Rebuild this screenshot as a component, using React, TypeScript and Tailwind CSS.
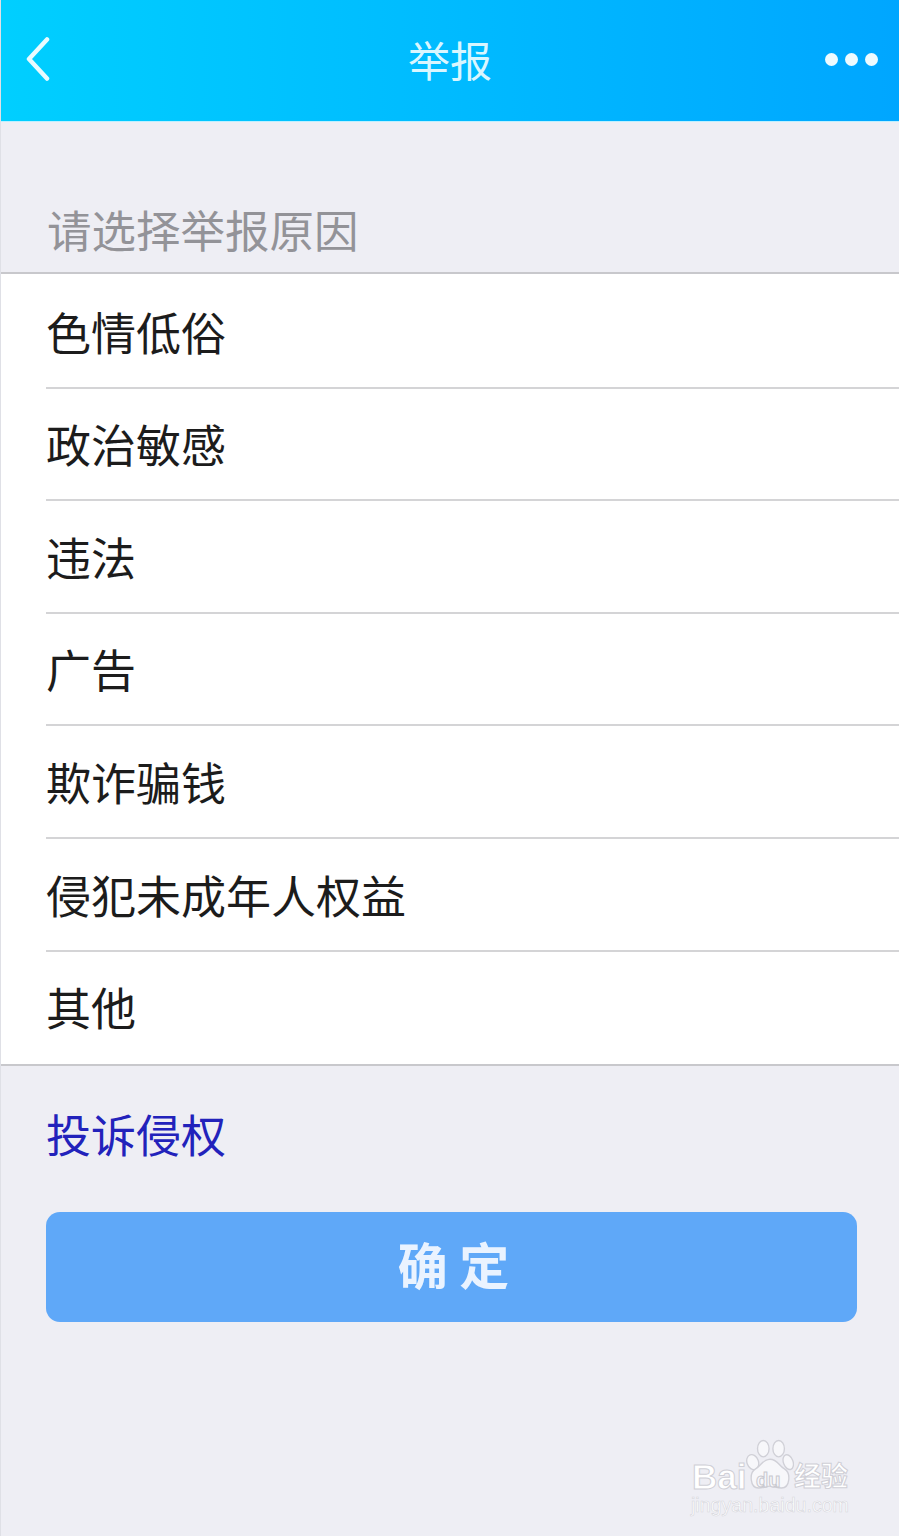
const reasons = ["色情低俗", "政治敏感", "违法", "广告", "欺诈骗钱", "侵犯未成年人权益", "其他"];

const cjk = "font-['Noto_Sans_CJK_SC',sans-serif]";

function Watermark() {
  return (
    <div className="absolute left-[690px] top-[1438px] w-[165px] text-white">
      <div className="relative h-[56px]">
        <span className="absolute left-[1px] top-[18px] font-['Liberation_Sans',sans-serif] text-[35px] leading-[42px] font-bold [-webkit-text-stroke:1px_#cfcfd6]">
          Bai
        </span>
        <svg className="absolute left-[55px] top-0" width="48" height="54" viewBox="0 0 50 56">
          <g fill="#f7f7fa" stroke="#d0d0d7" strokeWidth="1.4">
            <ellipse cx="7" cy="25" rx="6" ry="8" transform="rotate(-20 7 25)" />
            <ellipse cx="18" cy="11" rx="6" ry="8.500" />
            <ellipse cx="34" cy="11" rx="6" ry="8.500" />
            <ellipse cx="44" cy="25" rx="5" ry="8" transform="rotate(-20 44 25)" />
            <path d="M25 22c-8 0-9 7-15 10-7 4-6 20 3 20 5 0 8-2 12-2s7 2 12 2c9 0 10-16 3-20-6-3-7-10-15-10z" />
          </g>
        </svg>
        <span className="absolute left-[65px] top-[30px] font-['Liberation_Sans',sans-serif] text-[20px] leading-[24px] font-bold text-[#f7f7fa] [-webkit-text-stroke:1px_#c8c8cf]">
          du
        </span>
        <span className={`absolute left-[103px] top-[20px] text-[27px] leading-[34px] font-bold [-webkit-text-stroke:1px_#cfcfd6] ${cjk}`}>
          经验
        </span>
      </div>
      <div className="font-['Liberation_Sans',sans-serif] text-[19.600px] leading-[22px] whitespace-nowrap [-webkit-text-stroke:0.6px_#d6d6dc]">
        jingyan.baidu.com
      </div>
    </div>
  );
}

export default function App() {
  return (
    <div className={`relative flex h-[1536px] w-[899px] flex-col overflow-hidden border-l border-[#dfe0e6] bg-[#eeeef4] ${cjk}`}>
      <header className="grid h-[122px] shrink-0 grid-cols-[1fr_auto_1fr] items-center border-b border-[#bdf0ff] bg-gradient-to-r from-[#00cfff] to-[#00a6ff] px-[21px] text-white">
        <svg className="mb-[4px] ml-[4px]" width="24" height="44" viewBox="0 0 24 44" fill="none" stroke="#e9fbff" strokeWidth="4.500" strokeLinecap="round" strokeLinejoin="round">
          <path d="M21 2.500 3 22l18 19.500" />
        </svg>
        <h1 className="mb-[4px] text-[42px] leading-none font-normal text-[#d9f6ff]">举报</h1>
        <div className="mb-[2px] flex gap-[7px] justify-self-end">
          <span className="h-[13px] w-[13px] rounded-full bg-[#eefbff]" />
          <span className="h-[13px] w-[13px] rounded-full bg-[#eefbff]" />
          <span className="h-[13px] w-[13px] rounded-full bg-[#eefbff]" />
        </div>
      </header>

      <div className="flex h-[150px] shrink-0 items-end px-[46px] pb-[14px]">
        <p className="text-[44.500px] leading-[58px] font-normal text-[#939398]">请选择举报原因</p>
      </div>

      <ul className="border-y-2 border-[#c8c8cc] bg-white pl-[45px] pt-[2px]">
        {reasons.map((reason, i) => (
          <li
            key={reason}
            className={`flex h-[112.600px] items-center text-[45px] font-normal text-[#1c1c1c] ${
              i < reasons.length - 1 ? "border-b-2 border-[#d4d4d6]" : "pb-[3px]"
            }`}
          >
            {reason}
          </li>
        ))}
      </ul>

      <div className="px-[45px]">
        <a className="mt-[36px] block text-[45px] leading-[64px] font-normal text-[#2222bb]">投诉侵权</a>
        <button
          type="button"
          className="mt-[46px] flex h-[110px] w-[811px] items-center justify-center rounded-[14px] bg-[#5fa8f8] pb-[8px] pl-[4px] text-[50px] font-bold text-[#eaf3ff]"
        >
          确 定
        </button>
      </div>

      <Watermark />
    </div>
  );
}
